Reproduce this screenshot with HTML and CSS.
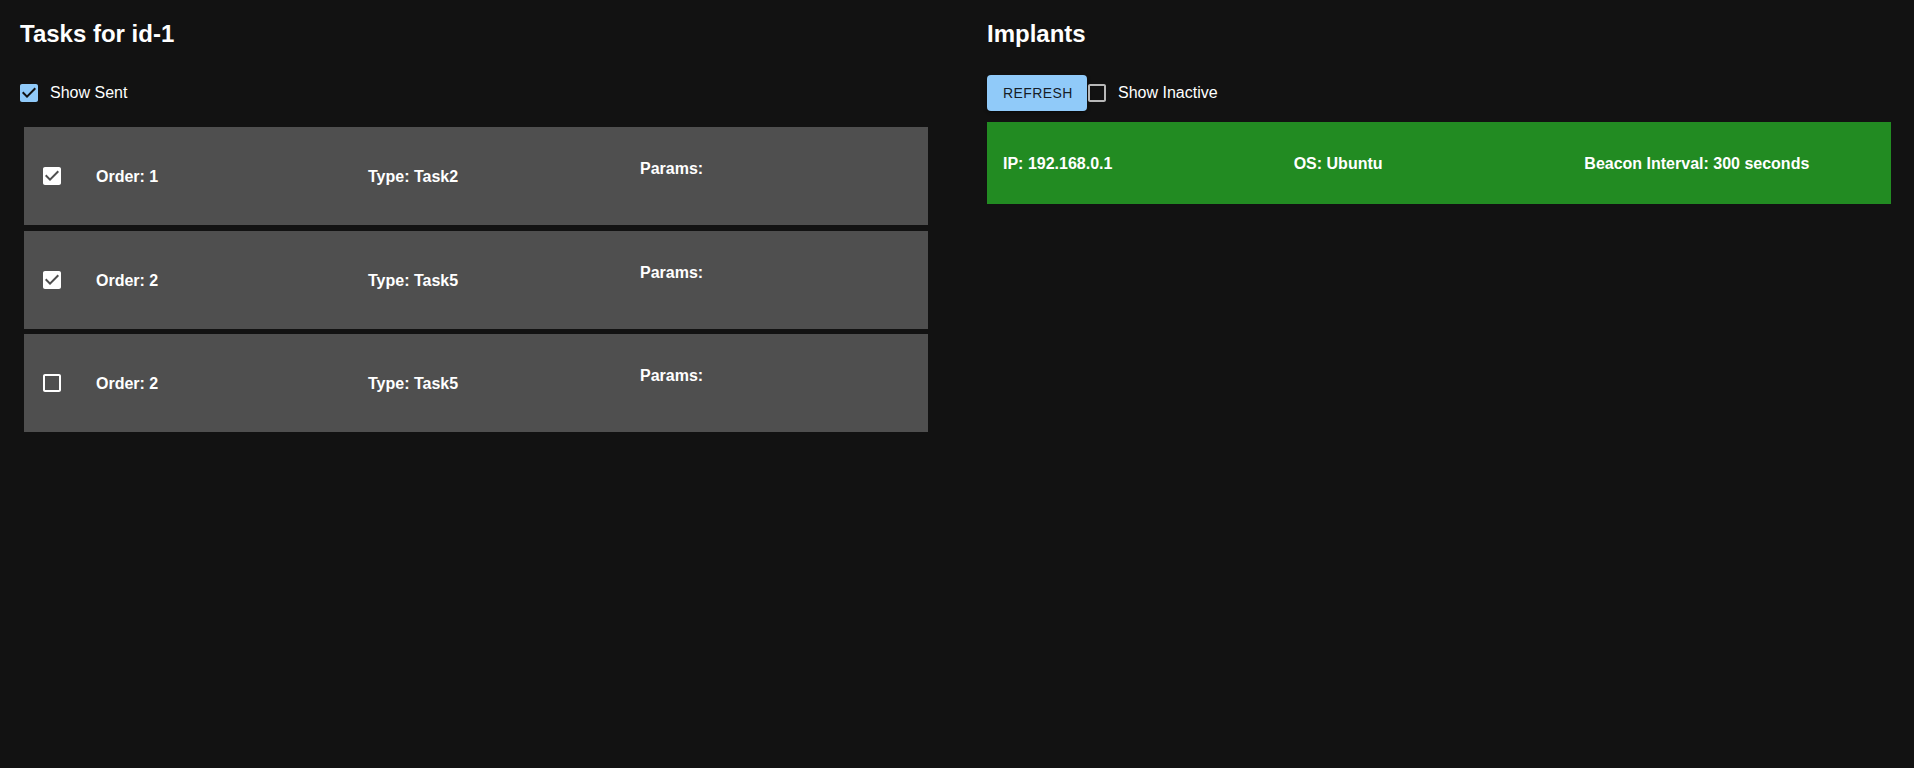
FILE: index.html
```html
<!DOCTYPE html>
<html>
<head>
<meta charset="utf-8">
<link rel="stylesheet" href="styles.css">
</head>
<body>
<div class="app">
  <section class="panel panel-tasks">
    <h5 class="title">Tasks for id-1</h5>
    <div class="controls">
      <label class="check-label">
        <svg class="cb cb-blue" viewBox="0 0 24 24"><path d="M19 3H5c-1.11 0-2 .9-2 2v14c0 1.1.89 2 2 2h14c1.11 0 2-.9 2-2V5c0-1.1-.89-2-2-2zm-9 14l-5-5 1.41-1.41L10 14.17l7.59-7.59L19 8l-9 9z"/></svg>
        <span class="check-text">Show Sent</span>
      </label>
    </div>
    <div class="task-list">
      <div class="task-card">
        <svg class="cb cb-white" viewBox="0 0 24 24"><path d="M19 3H5c-1.11 0-2 .9-2 2v14c0 1.1.89 2 2 2h14c1.11 0 2-.9 2-2V5c0-1.1-.89-2-2-2zm-9 14l-5-5 1.41-1.41L10 14.17l7.59-7.59L19 8l-9 9z"/></svg>
        <div class="field">Order: 1</div>
        <div class="field">Type: Task2</div>
        <div class="field params"><div>Params:</div><div class="params-list"></div></div>
      </div>
      <div class="task-card">
        <svg class="cb cb-white" viewBox="0 0 24 24"><path d="M19 3H5c-1.11 0-2 .9-2 2v14c0 1.1.89 2 2 2h14c1.11 0 2-.9 2-2V5c0-1.1-.89-2-2-2zm-9 14l-5-5 1.41-1.41L10 14.17l7.59-7.59L19 8l-9 9z"/></svg>
        <div class="field">Order: 2</div>
        <div class="field">Type: Task5</div>
        <div class="field params"><div>Params:</div><div class="params-list"></div></div>
      </div>
      <div class="task-card">
        <svg class="cb cb-white" viewBox="0 0 24 24"><path d="M19 5v14H5V5h14m0-2H5c-1.1 0-2 .9-2 2v14c0 1.1.9 2 2 2h14c1.1 0 2-.9 2-2V5c0-1.1-.9-2-2-2z"/></svg>
        <div class="field">Order: 2</div>
        <div class="field">Type: Task5</div>
        <div class="field params"><div>Params:</div><div class="params-list"></div></div>
      </div>
    </div>
  </section>
  <section class="panel panel-implants">
    <h5 class="title">Implants</h5>
    <div class="controls">
      <button class="btn">Refresh</button>
      <label class="check-label">
        <svg class="cb cb-grey cb-tight" viewBox="0 0 24 24"><path d="M19 5v14H5V5h14m0-2H5c-1.1 0-2 .9-2 2v14c0 1.1.9 2 2 2h14c1.1 0 2-.9 2-2V5c0-1.1-.9-2-2-2z"/></svg>
        <span class="check-text">Show Inactive</span>
      </label>
    </div>
    <div class="implant-card">
      <div class="field">IP: 192.168.0.1</div>
      <div class="field">OS: Ubuntu</div>
      <div class="field">Beacon Interval: 300 seconds</div>
    </div>
  </section>
</div>
</body>
</html>
```

FILE: styles.css
```css
html, body {
  margin: 0;
  padding: 0;
  background: #121212;
  color: #ffffff;
  font-family: "Liberation Sans", Arial, sans-serif;
}

.app {
  display: grid;
  grid-template-columns: 957px 957px;
  height: 768px;
}

.panel {
  padding-top: 18px;
}

.panel-tasks {
  padding-left: 20px;
}

.panel-implants {
  padding-left: 30px;
}

.title {
  margin: 0;
  font-size: 24px;
  font-weight: 700;
  line-height: 32px;
}

.controls {
  margin-top: 25px;
  height: 36px;
  display: flex;
  align-items: center;
}

.check-label {
  display: flex;
  align-items: center;
  font-size: 16px;
}

.cb {
  width: 24px;
  height: 24px;
  flex: none;
  display: block;
}

.panel-tasks .controls .cb {
  margin-left: -3px;
}

.cb-tight {
  margin-left: -2px;
}

.cb-blue { fill: #90caf9; }
.cb-white { fill: #ffffff; }
.cb-grey { fill: rgba(255, 255, 255, 0.7); }

.check-text {
  margin-left: 9px;
}

.task-list {
  margin-top: 16px;
  margin-left: 4px;
  width: 904px;
  display: flex;
  flex-direction: column;
  gap: 5.5px;
}

.task-card {
  height: 98px;
  background: #4f4f4f;
  padding: 0 16px;
  display: grid;
  grid-template-columns: 56px 272px 272px 1fr;
  align-items: center;
}

.field {
  font-size: 16px;
  font-weight: 700;
  padding-top: 2px;
}

.params-list {
  height: 16px;
}

.btn {
  width: 100px;
  height: 36px;
  flex: none;
  border: none;
  border-radius: 4px;
  background: #90caf9;
  color: rgba(0, 0, 0, 0.87);
  font-family: "Liberation Sans", Arial, sans-serif;
  font-size: 14px;
  font-weight: 400;
  letter-spacing: 0.4px;
  text-transform: uppercase;
  padding: 6px 16px;
  box-shadow: 0 3px 1px -2px rgba(0,0,0,0.2), 0 2px 2px 0 rgba(0,0,0,0.14), 0 1px 5px 0 rgba(0,0,0,0.12);
}

.implant-card {
  margin-top: 11px;
  width: 904px;
  height: 82px;
  box-sizing: border-box;
  background: #228b22;
  padding: 0 16px;
  display: grid;
  grid-template-columns: 1fr 1fr 1fr;
  align-items: center;
}
```
